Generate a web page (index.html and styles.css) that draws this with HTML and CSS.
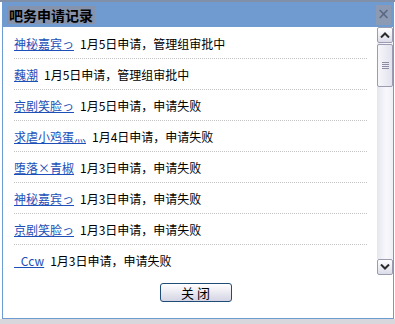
FILE: index.html
```html
<!DOCTYPE HTML>
<html lang="zh-CN">
    <head>
        <meta charset="UTF-8">
        <title>吧务申请记录</title>
        <link rel="stylesheet" href="styles.css">
    </head>

    <body>
        <div class="topline"></div>

        <div class="dialog">
            <div class="titlebar">
                <span class="title">吧务申请记录</span>
                <span class="close">&#215;</span>
            </div>

            <div class="list-wrap">
                <ul class="list">
                    <li><a href="#">神秘嘉宾っ</a><span>1月5日申请，管理组审批中</span></li>
                    <li><a href="#">蘶潮</a><span>1月5日申请，管理组审批中</span></li>
                    <li><a href="#">京剧笑脸っ</a><span>1月5日申请，申请失败</span></li>
                    <li><a href="#">求虐小鸡蛋灬</a><span>1月4日申请，申请失败</span></li>
                    <li><a href="#">堕落×青椒</a><span>1月3日申请，申请失败</span></li>
                    <li><a href="#">神秘嘉宾っ</a><span>1月3日申请，申请失败</span></li>
                    <li><a href="#">京剧笑脸っ</a><span>1月3日申请，申请失败</span></li>
                    <li><a href="#">_Ccw</a><span>1月3日申请，申请失败</span></li>
                </ul>

                <div class="scrollbar">
                    <div class="sb-btn">
                        <svg width="10" height="6" viewBox="0 0 10 6"><path d="M1 5.5 L5 1.5 L9 5.5" fill="none" stroke="#2b2b2b" stroke-width="2"/></svg>
                    </div>
                    <div class="sb-track">
                        <div class="sb-thumb">
                            <div class="grip"></div>
                            <div class="grip"></div>
                            <div class="grip"></div>
                            <div class="grip"></div>
                        </div>
                    </div>
                    <div class="sb-btn">
                        <svg width="10" height="6" viewBox="0 0 10 6"><path d="M1 0.5 L5 4.5 L9 0.5" fill="none" stroke="#2b2b2b" stroke-width="2"/></svg>
                    </div>
                </div>
            </div>

            <div class="actions">
                <button class="button" type="button">关 闭</button>
            </div>
        </div>

        <div class="bottomline"></div>
    </body>
</html>
```

FILE: styles.css
```css
* {
    box-sizing: border-box;
}
body {
    margin: 0;
    width: 395px;
    height: 324px;
    overflow: hidden;
    background: #fff;
    font-family: "Noto Sans CJK SC", "DejaVu Sans", sans-serif;
    font-size: 12px;
    color: #000;
}

.topline {
    height: 2px;
    background-color: #8190a9;
}
.bottomline {
    height: 6px;
    background-color: #d8d8dc;
}

.dialog {
    margin-left: 2px;
    width: 392px;
    height: 317px;
    border: 1px solid #6e9bd2;
    border-top: none;
    background: #fff;
    display: flex;
    flex-direction: column;
}

/*TITLEBAR*/
.titlebar {
    height: 25px;
    margin: 0 -1px;
    padding: 0 3px 0 5px;
    background-color: #6f9bd1;
    display: flex;
    align-items: center;
}
.title {
    font-size: 14px;
    font-weight: bold;
    line-height: 18px;
    padding: 0 2px;
    background-color: #8593ad;
    color: #000;
}
.close {
    margin-left: auto;
    width: 15px;
    height: 20px;
    background-color: #8c9ab4;
    color: #55647f;
    font-family: "DejaVu Sans", sans-serif;
    font-size: 15px;
    line-height: 19px;
    text-align: center;
}
/*TITLEBAR*/

.list-wrap {
    height: 248px;
    display: flex;
    overflow: hidden;
}
.list {
    list-style: none;
    margin: 0 10px 0 11px;
    padding: 1px 0 0 0;
    flex: 1;
    overflow: hidden;
}
.list li {
    height: 31px;
    border-bottom: 1px dotted #c4c4c4;
    display: flex;
    align-items: center;
    gap: 6px;
    white-space: nowrap;
}
.list a {
    color: #1d4fb8;
    text-decoration: underline;
}

/*SCROLLBAR*/
.scrollbar {
    width: 16px;
    display: flex;
    flex-direction: column;
}
.sb-btn {
    height: 16px;
    border: 1px solid #9b9bb2;
    border-radius: 2px;
    background: linear-gradient(to bottom, #ffffff, #dcdce9);
    display: flex;
    align-items: center;
    justify-content: center;
}
.sb-track {
    flex: 1;
    padding-top: 1px;
    background: linear-gradient(to right, #e6e6f0, #f8f8fc 60%, #eeeef6);
}
.sb-thumb {
    height: 43px;
    border: 1px solid #9b9bb2;
    border-radius: 2px;
    background: linear-gradient(to right, #f6f6fa, #e2e2ee);
    display: flex;
    flex-direction: column;
    align-items: center;
    justify-content: center;
    gap: 1px;
}
.grip {
    width: 7px;
    height: 1px;
    background-color: #8c8ca4;
}
/*SCROLLBAR*/

.actions {
    flex: 1;
    display: flex;
    justify-content: center;
    align-items: flex-start;
    padding: 8px 5px 0 0;
}
.button {
    width: 72px;
    height: 19px;
    padding: 0;
    border: 1px solid #1f4d78;
    border-radius: 3px;
    background: linear-gradient(to bottom, #ffffff, #d4d4e4);
    font-family: "Noto Sans CJK SC", sans-serif;
    font-size: 13px;
    line-height: 17px;
    color: #000;
    cursor: pointer;
}
```
